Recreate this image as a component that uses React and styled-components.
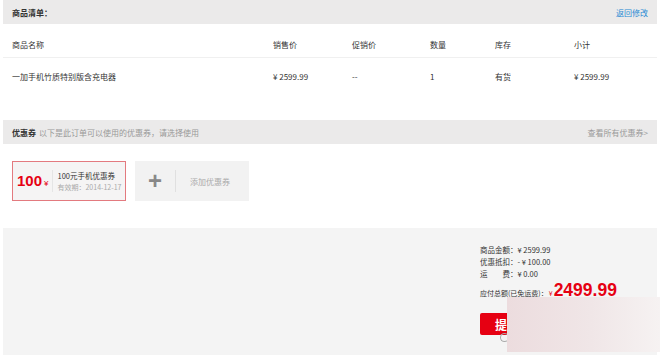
import React from "react";
import styled, { createGlobalStyle } from "styled-components";

const GlobalStyle = createGlobalStyle`
  html, body {
    margin: 0;
    padding: 0;
    background: #ffffff;
  }
  body {
    font-family: "Noto Sans CJK SC", "Liberation Sans", sans-serif;
    color: #333;
  }
`;

const Page = styled.div`
  position: relative;
  width: 660px;
  height: 357px;
  padding: 0 3px;
  box-sizing: border-box;
  overflow: hidden;
`;

const Bar = styled.div`
  display: flex;
  align-items: center;
  justify-content: space-between;
  height: 24px;
  padding: 0 9px;
  background: #ebeaea;
  font-size: 8px;
  margin-top: ${(p) => p.$top || 0}px;
`;

const BarTitle = styled.span`
  font-weight: bold;
  color: #333;
  span {
    font-weight: normal;
    color: #999;
    margin-left: 3px;
  }
`;

const BarLink = styled.a`
  color: ${(p) => (p.$muted ? "#999" : "#2a8ad4")};
  text-decoration: none;
`;

const Row = styled.div`
  display: grid;
  grid-template-columns: 261px 79px 78px 65px 79px 1fr;
  align-items: center;
  height: ${(p) => p.$h}px;
  margin-top: ${(p) => p.$top || 0}px;
  padding-left: 9px;
  font-size: 8px;
  color: #333;
  border-bottom: ${(p) => (p.$line ? "1px solid #f0f0f0" : "none")};
`;

const Coupons = styled.div`
  display: flex;
  gap: 9px;
  padding: 17px 0 0 9px;
  height: 40px;
`;

const CouponCard = styled.div`
  display: flex;
  align-items: center;
  width: 114px;
  height: 40px;
  box-sizing: border-box;
  border: 1px solid #e37a7f;
  background: #f5f4f4;
  overflow: hidden;
`;

const Amount = styled.div`
  display: flex;
  align-items: baseline;
  padding: 0 4px 0 4px;
  color: #e60012;
  font-family: "Liberation Sans", sans-serif;
  font-weight: bold;
  font-size: 15px;
  border-right: 1px solid #e5e5e5;
  height: 22px;
  line-height: 22px;
  span {
    font-size: 8px;
    font-weight: normal;
    margin-left: 2px;
  }
`;

const CouponInfo = styled.div`
  display: flex;
  flex-direction: column;
  gap: 1px;
  padding-left: 4px;
  font-size: 7.5px;
  line-height: 11px;
  color: #333;
  white-space: nowrap;
  small {
    font-size: 7px;
    color: #aaa;
  }
`;

const AddCard = styled.div`
  display: flex;
  align-items: center;
  width: 114px;
  height: 40px;
  background: #f2f2f2;
  font-size: 8px;
  color: #aaa;
`;

const Plus = styled.div`
  width: 40px;
  height: 22px;
  display: flex;
  align-items: center;
  justify-content: center;
  border-right: 1px solid #e0e0e0;
  color: #888;
  font-family: "Liberation Sans", sans-serif;
  font-size: 24px;
  font-weight: bold;
  line-height: 22px;
`;

const AddLabel = styled.span`
  padding-left: 14px;
`;

const Summary = styled.div`
  display: flex;
  justify-content: flex-end;
  margin-top: 27px;
  height: 127px;
  background: #f4f4f4;
  padding-right: 43px;
`;

const SummaryBox = styled.div`
  width: 134px;
  padding-top: 16px;
  font-size: 7.5px;
  color: #333;
`;

const Line = styled.div`
  height: 12px;
  line-height: 12px;
  white-space: nowrap;
`;

const TotalLine = styled.div`
  display: flex;
  align-items: baseline;
  height: 20px;
  white-space: nowrap;
  font-size: 7px;
  span {
    color: #e60012;
    margin-left: 1px;
  }
  strong {
    color: #e60012;
    font-family: "Liberation Sans", sans-serif;
    font-size: 17.5px;
    line-height: 20px;
    margin-left: 1px;
  }
`;

const Submit = styled.button`
  display: block;
  margin-top: 13px;
  width: 80px;
  height: 22px;
  border: none;
  border-radius: 2px;
  background: #e60012;
  color: #fff;
  font-family: "Noto Sans CJK SC", sans-serif;
  font-weight: bold;
  font-size: 12px;
  text-align: left;
  padding-left: 15px;
`;

const Veil = styled.div`
  position: absolute;
  left: 507px;
  top: 297px;
  width: 153px;
  height: 55px;
  background: linear-gradient(90deg, #ecdcde 0%, #f0e6e7 55%, #f6f2f2 100%);
`;

const Spinner = styled.div`
  position: absolute;
  left: 500px;
  top: 333px;
  width: 7px;
  height: 7px;
  border: 1px solid #aaa;
  border-right-color: transparent;
  border-radius: 50%;
`;

const columns = ["商品名称", "销售价", "促销价", "数量", "库存", "小计"];
const item = ["一加手机竹质特别版含充电器", "¥ 2599.99", "--", "1", "有货", "¥ 2599.99"];

export default function App() {
  return (
    <>
      <GlobalStyle />
      <Page>
        <Bar>
          <BarTitle>商品清单：</BarTitle>
          <BarLink href="#">返回修改</BarLink>
        </Bar>
        <Row $h={26} $top={7} $line>
          {columns.map((c) => (
            <span key={c}>{c}</span>
          ))}
        </Row>
        <Row $h={36}>
          {item.map((c, i) => (
            <span key={i}>{c}</span>
          ))}
        </Row>
        <Bar $top={26}>
          <BarTitle>
            优惠券<span>以下是此订单可以使用的优惠券，请选择使用</span>
          </BarTitle>
          <BarLink href="#" $muted>
            查看所有优惠券&gt;
          </BarLink>
        </Bar>
        <Coupons>
          <CouponCard>
            <Amount>
              100<span>¥</span>
            </Amount>
            <CouponInfo>
              <span>100元手机优惠券</span>
              <small>有效期：2014-12-17</small>
            </CouponInfo>
          </CouponCard>
          <AddCard>
            <Plus>+</Plus>
            <AddLabel>添加优惠券</AddLabel>
          </AddCard>
        </Coupons>
        <Summary>
          <SummaryBox>
            <Line>商品金额：¥ 2599.99</Line>
            <Line>优惠抵扣：- ¥ 100.00</Line>
            <Line>运　　费：¥ 0.00</Line>
            <TotalLine>
              应付总额(已免运费)：<span>¥</span>
              <strong>2499.99</strong>
            </TotalLine>
            <Submit>提交订单</Submit>
          </SummaryBox>
        </Summary>
        <Spinner />
        <Veil />
      </Page>
    </>
  );
}
